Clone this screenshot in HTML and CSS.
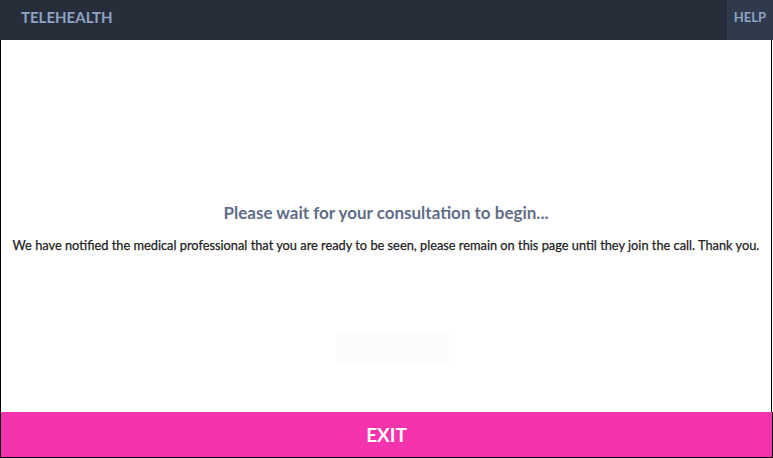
FILE: index.html
```html
<!DOCTYPE html>
<html>
<head>
<meta charset="utf-8">
<link rel="stylesheet" href="styles.css">
</head>
<body>
<div class="app">
  <header class="topbar">
    <div class="brand">TELEHEALTH</div>
    <div class="help">HELP</div>
  </header>
  <main class="content">
    <div class="message">
      <h1 class="title">Please wait for your consultation to begin...</h1>
      <p class="note">We have notified the medical professional that you are ready to be seen, please remain on this page until they join the call. Thank you.</p>
    </div>
    <div class="ghost"></div>
  </main>
  <footer class="exit">EXIT</footer>
</div>
</body>
</html>
```
FILE: styles.css
```css
* { box-sizing: border-box; }
html, body { margin: 0; padding: 0; background: #fff; }
body { font-family: Lato, "Open Sans", sans-serif; }
.app {
  width: 773px;
  height: 458px;
  display: flex;
  flex-direction: column;
}
.topbar {
  height: 40px;
  background: #272e39;
  display: flex;
  align-items: stretch;
  justify-content: space-between;
}
.brand {
  padding-left: 21px;
  display: flex;
  align-items: center;
  font-weight: 700;
  font-size: 15px;
  color: #8ea3c3;
  padding-bottom: 7px;
}
.help {
  width: 46px;
  background: #2f3b4d;
  display: flex;
  align-items: center;
  justify-content: center;
  font-weight: 700;
  font-size: 13px;
  color: #8ea3c3;
  padding-bottom: 7px;
}
.content {
  flex: 1;
  border-left: 1px solid #000;
  border-right: 1px solid #000;
  margin-right: 1px;
  display: flex;
  flex-direction: column;
  align-items: center;
  padding-top: 162px;
}
.message { text-align: center; }
.title {
  margin: 0;
  font-size: 17px;
  font-weight: 700;
  color: #5f6d87;
  line-height: 22px;
}
.note {
  margin: 13px 0 0;
  font-size: 12.8px;
  font-weight: 400;
  color: #1e1e1e;
  line-height: 16px;
  -webkit-text-stroke: 0.25px #1e1e1e;
}
.ghost {
  margin-top: 81px;
  margin-left: 12px;
  width: 113px;
  height: 28px;
  background: #fcfcfc;
}
.exit {
  height: 46px;
  background: #f533ac;
  border: 1px solid #000;
  border-top: none;
  display: flex;
  align-items: center;
  justify-content: center;
  color: #fff;
  font-weight: 700;
  font-size: 19px;
}
```
